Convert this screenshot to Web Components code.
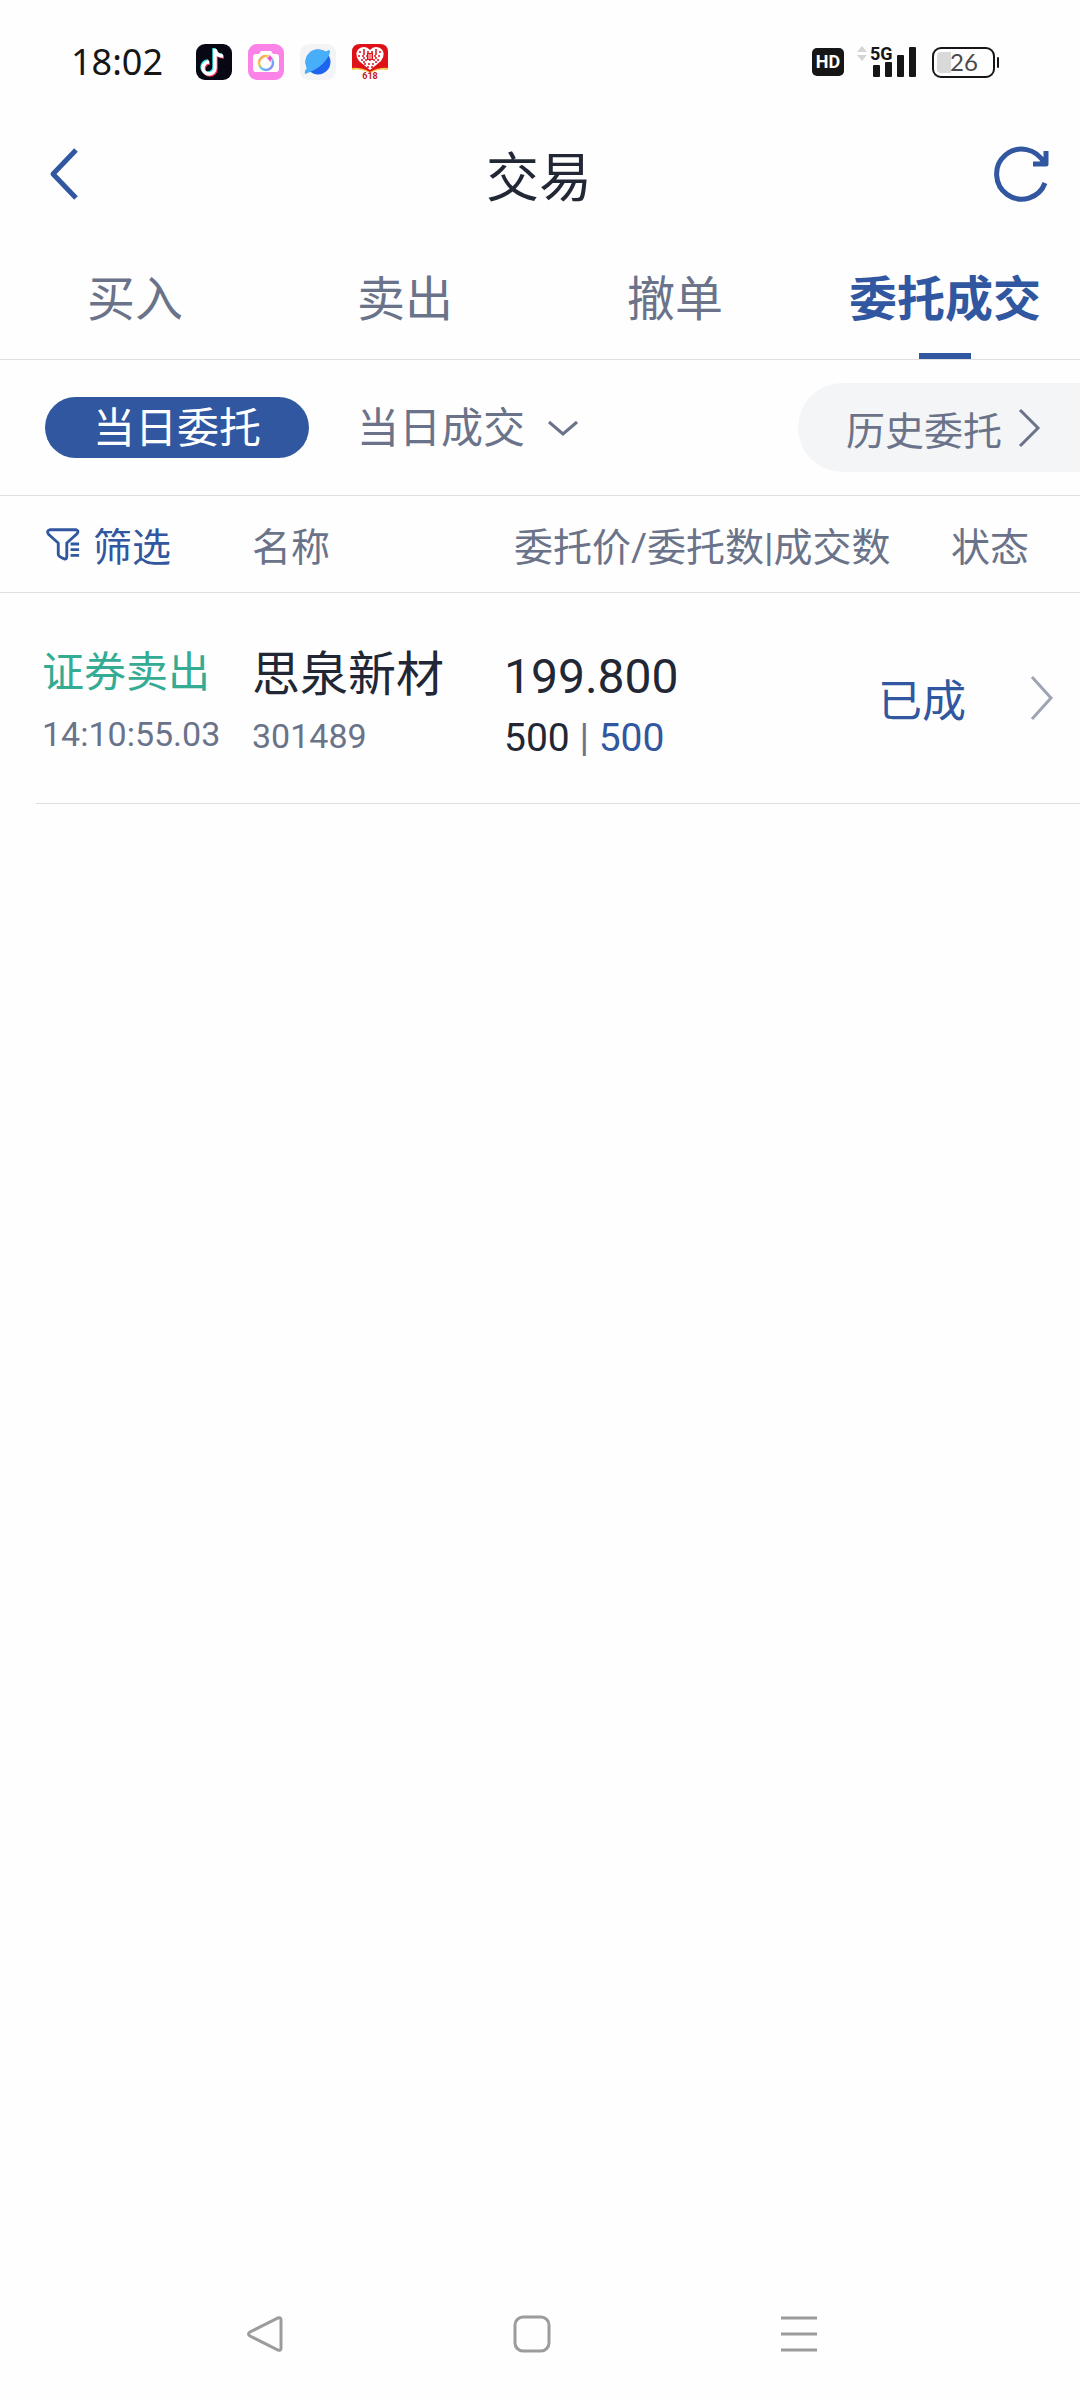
<!DOCTYPE html>
<html lang="zh-CN">
<head>
<meta charset="UTF-8">
<meta name="viewport" content="width=device-width, initial-scale=1">
<title>交易</title>
<style>
    :root {
        --blue: #30579f;
        --ink: #212735;
        --gray: #6a7389;
        --green: #34ab93;
        --line: #dfdfdf;
        --page: #fefefe;
    }

    body {
        margin: 0;
        min-height: 100vh;
        display: flex;
        flex-direction: column;
        background: var(--page);
        color: var(--ink);
        font-family: Roboto, "Noto Sans CJK SC", sans-serif;
    }

    main {
        flex: 1;
    }
</style>
</head>
<body>
    <status-bar time="18:02" battery="26"></status-bar>
    <page-header>交易</page-header>
    <trade-tabs>
        <trade-tab>买入</trade-tab>
        <trade-tab>卖出</trade-tab>
        <trade-tab>撤单</trade-tab>
        <trade-tab active>委托成交</trade-tab>
    </trade-tabs>
    <main>
        <order-filter>
            <span slot="current">当日委托</span>
            <span slot="deals">当日成交</span>
            <span slot="history">历史委托</span>
        </order-filter>
        <order-table side="证券卖出" time="14:10:55.03" name="思泉新材" code="301489"
            price="199.800" amount="500" filled="500" status="已成"></order-table>
    </main>
    <system-nav></system-nav>

<script>
'use strict';

class BaseElement extends HTMLElement {
    constructor() {
        super();
        this.attachShadow({ mode: "open" });
    }

    attr(name) {
        return this.getAttribute(name) || "";
    }

    // shared reset, every shadow root needs its own copy
    getReset() {
        return `
        <style>
        * {
            box-sizing: border-box;
        }
        button, a {
            margin: 0;
            padding: 0;
            border: 0;
            background: none;
            color: inherit;
            font: inherit;
            text-decoration: none;
        }
        svg {
            display: block;
            flex: none;
        }
        </style>
        `;
    }

    connectedCallback() {
        const template = document.createElement("template");
        template.innerHTML = this.getReset() + this.getStyles() + this.getTemplate();
        this.shadowRoot.appendChild(template.content.cloneNode(true));
    }
}

class StatusBar extends BaseElement {
    getTemplate() {
        return `
        <span class="time">${this.attr("time")}</span>
        <div class="apps">
            <svg width="36" height="36" viewBox="0 0 36 36">
                <rect width="36" height="36" rx="9" fill="#080814"/>
                <g fill="none" stroke-width="3.500">
                    <path stroke="#35e6e4" d="M19 5v19a6 6 0 1 1-6-6M19 6c1 4 4 6 8 6" transform="translate(-1 -1)"/>
                    <path stroke="#f5305c" d="M19 5v19a6 6 0 1 1-6-6M19 6c1 4 4 6 8 6" transform="translate(1 1)"/>
                    <path stroke="#fff" d="M19 5v19a6 6 0 1 1-6-6M19 6c1 4 4 6 8 6"/>
                </g>
            </svg>
            <svg width="36" height="36" viewBox="0 0 36 36">
                <defs>
                    <linearGradient id="ring" x1="0" y1="0" x2="1" y2="1">
                        <stop offset="0" stop-color="#f78b65"/>
                        <stop offset=".3" stop-color="#f8c74f"/>
                        <stop offset=".55" stop-color="#62c6ef"/>
                        <stop offset="1" stop-color="#8b7cf5"/>
                    </linearGradient>
                </defs>
                <rect width="36" height="36" rx="9" fill="#fb82e6"/>
                <path fill="#fff" d="M11 10l2-3h10l2 3h3q3 0 3 3v12q0 3-3 3H8q-3 0-3-3V13q0-3 3-3z"/>
                <circle cx="18" cy="19" r="7" fill="none" stroke="url(#ring)" stroke-width="2.500"/>
                <path fill="#ec4fd4" stroke="#fff" stroke-width=".5" d="M22 10q1 4 4 4q-3 1-4 5q-1-4-4-5q3 0 4-4z"/>
            </svg>
            <svg width="36" height="36" viewBox="0 0 36 36">
                <rect width="36" height="36" rx="9" fill="#f3f4f5"/>
                <circle cx="18" cy="18" r="12.500" fill="#1f64ee"/>
                <path fill="#49aefa" d="M5 30q-1-3 2-6C3 15 9 5 18 5.500q5 0 8 2 4-3 4 0 0 3-3 7C22 22 14 27 5 30z"/>
            </svg>
            <svg width="36" height="36" viewBox="0 0 36 36">
                <path fill="#f5c84d" d="M0 20h36v6q-9-2-18 3Q9 24 0 26z"/>
                <path fill="#dd1117" d="M0 24V8q0-8 8-8h20q8 0 8 8v16q-9-1-18 4Q9 23 0 24z"/>
                <path fill="#fff" d="M18 26L7 17Q1 8 8 4q6-3 10 2 4-5 10-2 7 4 1 13z"/>
                <path fill="none" stroke="#dd1117" stroke-width="1.500" stroke-dasharray="2 2" d="M7 8h22M6 12h24M9 16h18M12 20h12M12 5v14M24 5v14M15 23h6"/>
                <path fill="#dd1117" d="M15 9h6v7h-6z"/>
                <path stroke="#fff" d="M17 10v5M19 10v5"/>
                <text x="18" y="35" text-anchor="middle" font-size="9" font-weight="700" fill="#c81820">618</text>
            </svg>
        </div>
        <div class="system">
            <span class="hd">HD</span>
            <svg class="signal" width="60" height="48" viewBox="0 -6 60 48">
                <path fill="#d5d5d5" d="M0 8l5-6 5 6zM0 11l5 6 5-6z"/>
                <text x="13" y="16" font-size="18" font-weight="700">5G</text>
                <rect x="16" y="21" width="7" height="12" rx="1"/>
                <rect x="28" y="18" width="7" height="15" rx="1"/>
                <rect x="40" y="11" width="7" height="22" rx="1"/>
                <rect x="52" y="3" width="7" height="30" rx="1"/>
            </svg>
            <svg class="battery" width="68" height="36" viewBox="0 0 68 36">
                <rect x="1" y="4" width="61" height="29" rx="8" fill="none" stroke="#161616" stroke-width="2"/>
                <path fill="#d9d9d9" d="M9 8h10v21H9q-4 0-4-4V12q0-4 4-4z"/>
                <rect x="65" y="13" width="2" height="11" rx="1"/>
                <text x="32" y="27" text-anchor="middle" font-size="24" fill="#4a4a4a">${this.attr("battery")}</text>
            </svg>
        </div>
        `;
    }

    getStyles() {
        return `
        <style>
        :host {
            display: flex;
            align-items: center;
            height: 36px;
            padding: 44px 80px 32px 71px;
            color: #161616;
        }
        .time {
            font: 36px/36px "Noto Sans", sans-serif;
        }
        .apps {
            display: flex;
            gap: 16px;
            margin-left: 33px;
        }
        .system {
            display: flex;
            align-items: center;
            margin-left: auto;
        }
        .hd {
            width: 32px;
            border-radius: 5px;
            background: #161616;
            color: #fff;
            font-size: 18px;
            line-height: 28px;
            font-weight: 700;
            text-align: center;
        }
        .signal {
            margin-left: 13px;
            fill: #161616;
        }
        .battery {
            margin-left: 15px;
            fill: #161616;
            font-family: Lato, sans-serif;
        }
        </style>
        `;
    }
}

class PageHeader extends BaseElement {
    getTemplate() {
        return `
        <button class="back" aria-label="返回">
            <svg width="32" height="56" viewBox="0 0 32 56">
                <path d="M29 4L6 28l23 24"/>
            </svg>
        </button>
        <h1><slot></slot></h1>
        <button class="refresh" aria-label="刷新">
            <svg width="60" height="60" viewBox="0 0 60 60">
                <path d="M54 39A25 25 0 1 1 53 19M55 7v13H42"/>
            </svg>
        </button>
        `;
    }

    getStyles() {
        return `
        <style>
        :host {
            display: grid;
            grid-template-columns: 1fr auto 1fr;
            align-items: center;
            height: 124px;
            padding: 0 29px 0 47px;
        }
        h1 {
            margin: 0 0 0 -20px;
            font: 400 53px/64px "Noto Sans CJK SC", sans-serif;
        }
        .refresh {
            justify-self: end;
        }
        .back {
            justify-self: start;
        }
        path {
            fill: none;
            stroke: var(--blue);
            stroke-width: 5;
            stroke-linejoin: round;
        }
        </style>
        `;
    }
}

class TradeTabs extends BaseElement {
    getTemplate() {
        return `<slot></slot>`;
    }

    getStyles() {
        return `
        <style>
        :host {
            display: grid;
            grid-template-columns: repeat(4, 1fr);
            height: 123px;
            border-bottom: 1px solid var(--line);
        }
        </style>
        `;
    }
}

class TradeTab extends BaseElement {
    getTemplate() {
        return `<button><slot></slot></button>`;
    }

    getStyles() {
        return `
        <style>
        :host {
            display: block;
            color: var(--gray);
            font-size: 48px;
            line-height: 60px;
        }
        :host([active]) {
            color: var(--blue);
            font-weight: 700;
        }
        button {
            position: relative;
            width: 100%;
            height: 100%;
            padding-top: 4px;
            white-space: nowrap;
        }
        :host([active]) button::after {
            content: "";
            position: absolute;
            left: calc(50% - 26px);
            bottom: 0;
            width: 52px;
            height: 6px;
            background: var(--blue);
        }
        </style>
        `;
    }
}

class OrderFilter extends BaseElement {
    getTemplate() {
        return `
        <button class="current"><slot name="current"></slot></button>
        <button class="deals">
            <slot name="deals"></slot>
            <svg width="32" height="20" viewBox="0 0 32 20">
                <path d="M2 3l14 12L30 3"/>
            </svg>
        </button>
        <a class="history" href="#history">
            <slot name="history"></slot>
            <svg width="24" height="44" viewBox="0 0 24 44">
                <path d="M2 4l18 18L2 40"/>
            </svg>
        </a>
        `;
    }

    getStyles() {
        return `
        <style>
        :host {
            display: flex;
            align-items: center;
            height: 135px;
            padding-left: 45px;
            border-bottom: 1px solid var(--line);
            color: var(--gray);
            font-size: 42px;
        }
        .current, .deals {
            padding-top: 2px;
            line-height: 56px;
        }
        .current {
            width: 264px;
            height: 61px;
            border-radius: 31px;
            background: var(--blue);
            color: #fff;
        }
        .deals {
            display: flex;
            align-items: center;
            gap: 22px;
            margin-left: 48px;
        }
        .history {
            display: flex;
            align-items: center;
            gap: 16px;
            height: 89px;
            margin-left: auto;
            padding: 0 38px 0 48px;
            border-radius: 45px 0 0 45px;
            background: #f3f5f7;
            font-size: 39px;
        }
        path {
            fill: none;
            stroke: var(--gray);
            stroke-width: 3;
        }
        </style>
        `;
    }
}

class OrderTable extends BaseElement {
    getTemplate() {
        return `
        <table>
            <thead>
                <tr>
                    <th>
                        <button class="filter">
                            <svg width="36" height="36" viewBox="-1 -1 38 38">
                                <path d="M4 3h28q3 1 1 4L22 17v14q0 3-2 3-7-3-7-5V17L3 8Q0 4 4 3z"/>
                                <path d="M26 18h9M26 24h9M26 30h9"/>
                            </svg>
                            筛选
                        </button>
                    </th>
                    <th>名称</th>
                    <th>委托价/委托数|成交数</th>
                    <th>状态</th>
                </tr>
            </thead>
            <tbody>
                <tr>
                    <td class="type">
                        <div class="side">${this.attr("side")}</div>
                        <div class="small">${this.attr("time")}</div>
                    </td>
                    <td class="stock">
                        <div class="big">${this.attr("name")}</div>
                        <div class="small">${this.attr("code")}</div>
                    </td>
                    <td class="deal">
                        <div class="big">${this.attr("price")}</div>
                        <div class="amount">${this.attr("amount")} <i>|</i> <b>${this.attr("filled")}</b></div>
                    </td>
                    <td class="status">
                        ${this.attr("status")}
                        <svg width="24" height="48" viewBox="0 0 24 48">
                            <path d="M2 3l19 21L2 45"/>
                        </svg>
                    </td>
                </tr>
            </tbody>
        </table>
        `;
    }

    getStyles() {
        return `
        <style>
        :host {
            display: block;
        }
        table, thead, tbody {
            display: block;
        }
        tr {
            display: grid;
            align-items: center;
            border-bottom: 1px solid var(--line);
        }
        th, td {
            padding: 0;
            text-align: left;
            font-weight: 400;
            white-space: nowrap;
        }
        thead tr {
            grid-template-columns: 207px 262px 1fr auto;
            height: 97px;
            padding: 0 51px 0 45px;
            color: var(--gray);
            font-size: 39px;
        }
        tbody tr {
            grid-template-columns: 210px 252px 1fr auto;
            height: 211px;
            margin-left: 36px;
            padding: 0 26px 0 6px;
        }
        .filter {
            display: flex;
            align-items: center;
            gap: 12px;
            color: var(--blue);
        }
        .filter path {
            fill: none;
            stroke: var(--blue);
            stroke-width: 3;
        }
        .type {
            padding-top: 6px;
        }
        .stock {
            padding-top: 9px;
        }
        .deal {
            padding-top: 13px;
        }
        .side, .big {
            line-height: 66px;
        }
        .side {
            color: var(--green);
            font-size: 42px;
        }
        .big {
            font-size: 48px;
        }
        .small, .amount {
            line-height: 56px;
        }
        .small {
            color: var(--gray);
            font-size: 34px;
        }
        .amount {
            font-size: 39px;
        }
        i, b {
            font-style: normal;
            font-weight: 400;
        }
        i {
            color: var(--gray);
        }
        b, .status {
            color: var(--blue);
        }
        .status {
            display: flex;
            align-items: center;
            gap: 64px;
            font-size: 44px;
        }
        .status path {
            fill: none;
            stroke: #9da4b2;
            stroke-width: 3;
        }
        </style>
        `;
    }
}

class SystemNav extends BaseElement {
    getTemplate() {
        return `
        <button aria-label="返回">
            <svg width="38" height="38" viewBox="0 0 38 38">
                <path d="M32 3Q35 2 35 5v28q0 3-3 2L4 21q-3-2 0-4z"/>
            </svg>
        </button>
        <button aria-label="主页">
            <svg width="38" height="38" viewBox="0 0 38 38">
                <rect x="2" y="2" width="34" height="34" rx="8"/>
            </svg>
        </button>
        <button aria-label="最近任务">
            <svg width="38" height="38" viewBox="0 0 38 38">
                <path d="M1 3h36M1 19h36M1 35h36"/>
            </svg>
        </button>
        `;
    }

    getStyles() {
        return `
        <style>
        :host {
            display: grid;
            grid-template-columns: repeat(3, 1fr);
            align-items: center;
            height: 132px;
            padding: 0 147px 0 131px;
        }
        button {
            justify-self: center;
        }
        path, rect {
            fill: none;
            stroke: #9c9c9c;
            stroke-width: 3;
        }
        </style>
        `;
    }
}

customElements.define("status-bar", StatusBar);
customElements.define("page-header", PageHeader);
customElements.define("trade-tabs", TradeTabs);
customElements.define("trade-tab", TradeTab);
customElements.define("order-filter", OrderFilter);
customElements.define("order-table", OrderTable);
customElements.define("system-nav", SystemNav);
</script>
</body>
</html>
